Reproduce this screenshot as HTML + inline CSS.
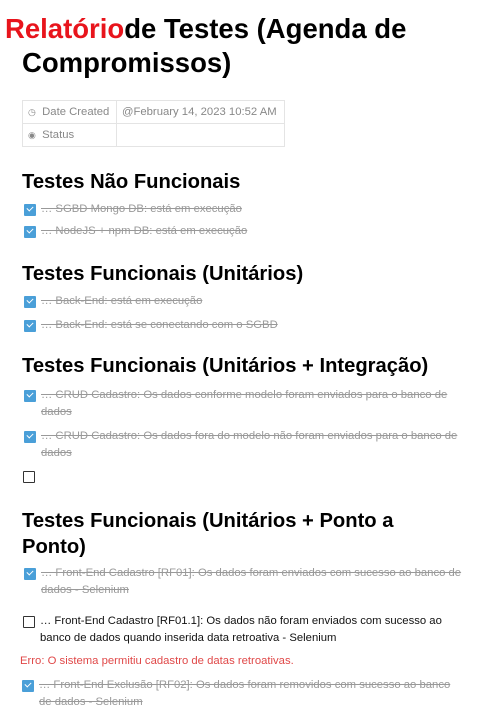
<!DOCTYPE html>
<html><head><meta charset="utf-8"><style>
body{margin:0;width:492px;height:713px;background:#fff;font-family:"Liberation Sans",sans-serif;position:relative;overflow:hidden}
.a{position:absolute;white-space:nowrap}
.t{font-weight:bold;font-size:27.5px;color:#000;line-height:32px}
h2{position:absolute;margin:0;font-size:20.2px;font-weight:bold;left:22px;line-height:26px;white-space:nowrap}
.s{position:absolute;left:41px;font-size:11.3px;color:#999;text-decoration:line-through;line-height:17px;width:425px}
.cb{position:absolute;left:24px;width:12px;height:12px;background:#4a9fd8;border-radius:1px}
.cb:after{content:"";position:absolute;left:3px;top:2px;width:5px;height:3px;border-left:1.5px solid #fff;border-bottom:1.5px solid #fff;transform:rotate(-45deg)}
.ub{position:absolute;left:23px;width:10px;height:10px;border:1.5px solid #333;border-radius:1px}
table{position:absolute;left:22px;top:100px;border-collapse:collapse;font-size:11.3px;color:#888;white-space:nowrap;table-layout:fixed;width:262px}
td{border:1px solid #e4e4e4;height:22px;padding:0 5px;overflow:hidden}
</style></head><body>
<div class="a t" style="left:5px;top:13px"><span style="color:#e8141c">Relatório</span>de Testes (Agenda de</div>
<div class="a t" style="left:22px;top:47px">Compromissos)</div>
<table><colgroup><col style="width:94px"><col style="width:168px"></colgroup><tr><td><span style="font-size:9px">◷</span>&nbsp; Date Created</td><td>@February 14, 2023 10:52 AM</td></tr>
<tr><td><span style="font-size:9px">◉</span>&nbsp; Status</td><td></td></tr></table>

<h2 style="top:169px">Testes Não Funcionais</h2>
<div class="cb" style="top:204px"></div><div class="s" style="top:201px">… SGBD Mongo DB: está em execução</div>
<div class="cb" style="top:226px"></div><div class="s" style="top:223px">… NodeJS + npm DB: está em execução</div>

<h2 style="top:261px">Testes Funcionais (Unitários)</h2>
<div class="cb" style="top:296px"></div><div class="s" style="top:293px">… Back-End: está em execução</div>
<div class="cb" style="top:320px"></div><div class="s" style="top:317px">… Back-End: está se conectando com o SGBD</div>

<h2 style="top:353px">Testes Funcionais (Unitários + Integração)</h2>
<div class="cb" style="top:390px"></div><div class="s" style="top:387px;white-space:normal">… CRUD Cadastro: Os dados conforme modelo foram enviados para o banco de dados</div>
<div class="cb" style="top:431px"></div><div class="s" style="top:428px;white-space:normal">… CRUD Cadastro: Os dados fora do modelo não foram enviados para o banco de dados</div>
<div class="ub" style="top:471px"></div>

<h2 style="top:508px">Testes Funcionais (Unitários + Ponto a</h2>
<h2 style="top:534px">Ponto)</h2>
<div class="cb" style="top:568px"></div><div class="s" style="top:565px;white-space:normal">… Front-End Cadastro [RF01]: Os dados foram enviados com sucesso ao banco de dados - Selenium</div>
<div class="ub" style="top:616px"></div><div class="a" style="left:40px;top:613px;font-size:11.3px;line-height:17px;color:#111;white-space:normal;width:420px">… Front-End Cadastro [RF01.1]: Os dados não foram enviados com sucesso ao banco de dados quando inserida data retroativa - Selenium</div>
<div class="a" style="left:20px;top:655px;font-size:11.3px;color:#e04848">Erro: O sistema permitiu cadastro de datas retroativas.</div>
<div class="cb" style="top:680px;left:22px"></div><div class="s" style="top:677px;left:39px;white-space:normal">… Front-End Exclusão [RF02]: Os dados foram removidos com sucesso ao banco de dados - Selenium</div>
</body></html>
